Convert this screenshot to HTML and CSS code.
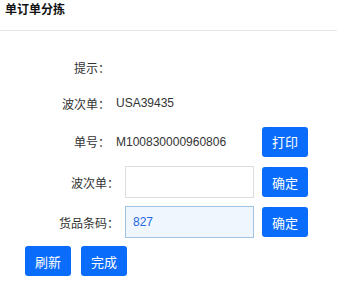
FILE: index.html
```html
<!DOCTYPE html>
<html lang="zh-CN">
<head>
    <meta charset="UTF-8">
    <meta name="viewport" content="width=device-width, initial-scale=1.0">
    <title>单订单分拣</title>
<link rel="stylesheet" href="styles.css">
</head>
<body>
    <div class="header">单订单分拣</div>
    <div class="form">
        <div class="row row-text">
            <span class="label">提示：</span>
            <span class="value"></span>
        </div>
        <div class="row row-text">
            <span class="label">波次单：</span>
            <span class="value">USA39435</span>
        </div>
        <div class="row row-btn">
            <span class="label">单号：</span>
            <span class="value">M100830000960806</span>
            <button class="btn">打印</button>
        </div>
        <div class="row row-input">
            <span class="label">波次单：</span>
            <input class="field" type="text" value="">
            <button class="btn">确定</button>
        </div>
        <div class="row row-input">
            <span class="label">货品条码：</span>
            <input class="field field-active" type="text" value="827">
            <button class="btn">确定</button>
        </div>
        <div class="actions">
            <button class="btn">刷新</button>
            <button class="btn">完成</button>
        </div>
    </div>
</body>
</html>
```

FILE: styles.css
```css
body {
  margin: 0;
  padding: 0;
  background: #fff;
  font-family: "Liberation Sans", "Noto Sans CJK SC", sans-serif;
  font-size: 12px;
  color: #333;
}

.header {
  height: 30px;
  line-height: 20px;
  padding: 0 5px;
  font-weight: bold;
  color: #111;
  border-bottom: 1px solid #e6e6e6;
}

.form {
  display: flex;
  flex-direction: column;
  gap: 8px;
  padding-top: 22px;
}

.row {
  display: flex;
  align-items: center;
}

.row-text {
  height: 28px;
}

.row-btn {
  height: 33px;
}

.row-input {
  height: 32px;
}

.label {
  text-align: right;
  color: #333;
}

.row-text .label,
.row-btn .label {
  width: 110px;
}

.row-input .label {
  width: 119px;
}

.value {
  width: 138px;
  margin-left: 6px;
  color: #333;
}

.field {
  box-sizing: border-box;
  width: 129px;
  height: 32px;
  margin: 0 0 0 6px;
  padding: 0 7px;
  border: 1px solid #dedede;
  background: #fff;
  font-family: inherit;
  font-size: 12px;
  color: #2468e8;
  outline: none;
}

.field-active {
  background: #eff6fd;
  border-color: #9fc3e3;
}

.btn {
  width: 46px;
  height: 30px;
  margin-left: 8px;
  padding: 0;
  border: none;
  border-radius: 3px;
  background: #0a6cfb;
  color: #fff;
  font-family: inherit;
  font-size: 13px;
  cursor: pointer;
}

.actions {
  display: flex;
  gap: 10px;
  padding-left: 25px;
}

.actions .btn {
  margin-left: 0;
}
```
